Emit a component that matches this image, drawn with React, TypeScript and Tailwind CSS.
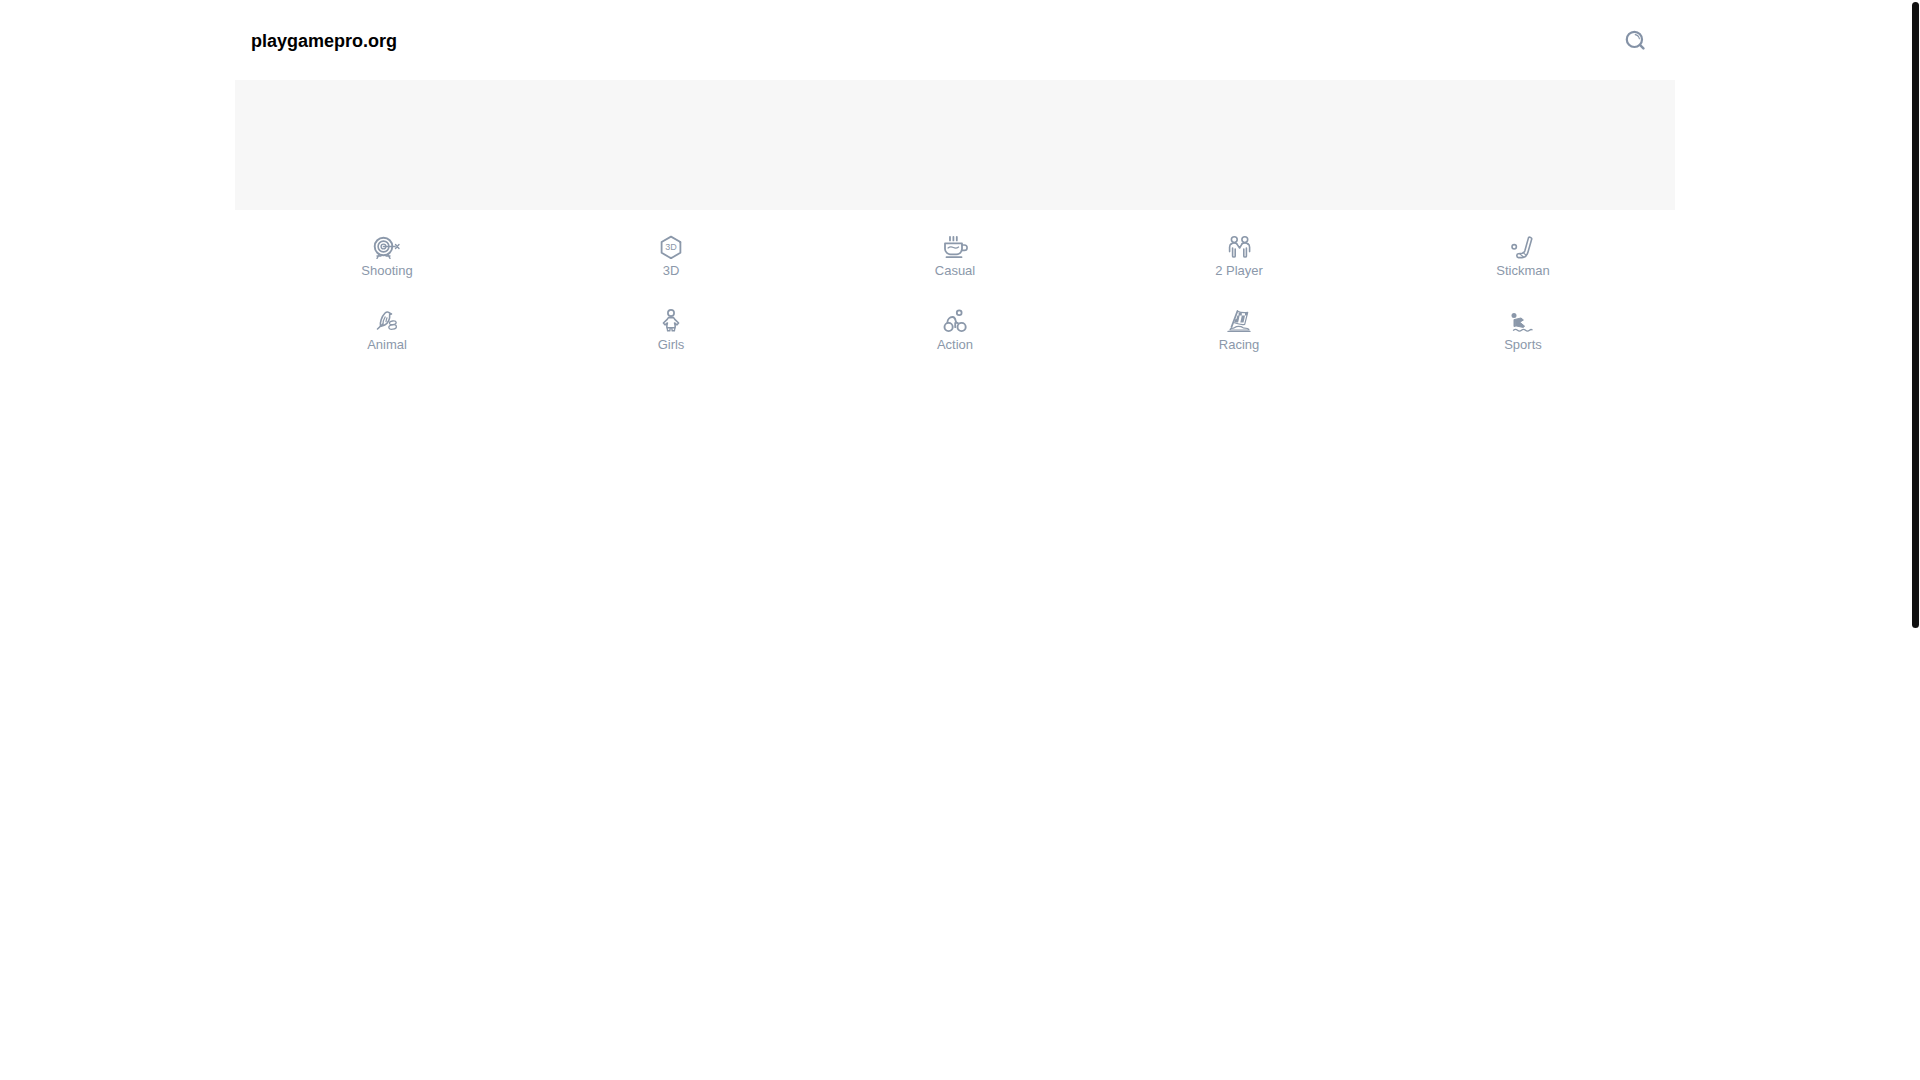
import React from "react";

const S = { fill: "none", stroke: "currentColor", strokeWidth: 1.6, strokeLinecap: "round", strokeLinejoin: "round" } as const;

const Svg = ({ children }: { children: React.ReactNode }) => (
  <svg width="30" height="24" viewBox="0 0 30 24" {...S}>{children}</svg>
);

const icons: Record<string, React.ReactNode> = {
  Shooting: (
    <Svg>
      <circle cx="11.5" cy="11.5" r="8.8" strokeWidth="1.9" />
      <circle cx="11.5" cy="11.5" r="5.4" strokeWidth="1.6" />
      <circle cx="11.5" cy="11.5" r="2.4" strokeWidth="1.4" />
      <path d="M11.5 11.5H23" />
      <path d="M23.5 9.5l3.5 4M27 9.5l-3.5 4" strokeWidth="1.4" />
      <path d="M7 20l-2 3.4M16 20l2 3.4M5 21h4M14 21h4" strokeWidth="1.4" />
    </Svg>
  ),
  "3D": (
    <Svg>
      <path d="M15 1.6l9.4 5.4v10.8L15 23.2 5.6 17.8V7z" strokeWidth="1.8" />
      <circle cx="15" cy="23" r="1.2" fill="currentColor" stroke="none" />
      <circle cx="24.2" cy="7.2" r="1" fill="currentColor" stroke="none" />
      <text x="15" y="15.4" textAnchor="middle" fontFamily="Liberation Sans, sans-serif" fontSize="9" fill="currentColor" stroke="none">3D</text>
    </Svg>
  ),
  Casual: (
    <Svg>
      <path d="M10 1.8v3.6M13.4 1.8v3.6M16.8 1.8v3.6" strokeWidth="1.8" />
      <path d="M5 8.4h17v5.6c0 3-2.6 5.4-5.6 5.4h-5.8C8 19.4 5 17 5 14z" strokeWidth="1.8" />
      <path d="M22 10h2.4a2.3 2.3 0 0 1 0 5.4H21.5" strokeWidth="1.6" />
      <path d="M8 13c2-1.6 3.6-1.4 5.4-.5s3.4.8 5.2-.5" strokeWidth="1.2" />
      <path d="M6.5 22.2h15" strokeWidth="1.8" />
    </Svg>
  ),
  "2 Player": (
    <Svg>
      <circle cx="10.3" cy="4.6" r="2.9" />
      <circle cx="20.8" cy="4.6" r="2.9" />
      <path d="M7.4 8.8c-1.4.6-1.8 2-1.8 3.4v4.4M12.6 8.6l3 4.4 2.6-4.4" />
      <path d="M23.8 8.8c1.4.6 1.8 2 1.8 3.4v4.4" />
      <path d="M8.6 13v8.2c0 1.1 2.6 1.1 2.6 0V14M22.4 13v8.2c0 1.1-2.6 1.1-2.6 0V14" />
      <path d="M7.4 8.8c1.4-.8 3.8-.8 5.2-.2M23.8 8.8c-1.4-.8-4-.8-5.6-.2" />
    </Svg>
  ),
  Stickman: (
    <Svg>
      <circle cx="6.2" cy="11.8" r="2.2" />
      <path d="M20.6 2.4c1-.6 3.2.2 3.2 1.4L20 17c-.8 3-3 5.6-6 5.6H10.4c-1.8 0-2.2-3.4-.2-3.8l4.2-.6c1.4-.3 2-1 2.4-2.2z" />
      <path d="M11.5 18.6l4 3.4M15 17.4l3.2 3" strokeWidth="1.2" />
    </Svg>
  ),
  Animal: (
    <Svg>
      <path d="M5.5 20l5.2-4.8" />
      <path d="M8.5 17c-.8-3 1-9.5 4.6-13 1.6-1.5 3.6-1.2 4.4 0l2 .9-1.8.7c.4 4-1.4 8.6-5 10.4-1.4.7-3.4 1.2-4.2 1" />
      <path d="M11 15.5c-.3-2.6.6-5 2.2-7.6M14 12.6c.3-1.4.5-2.6 1-3.8" strokeWidth="1.2" />
      <ellipse cx="20.8" cy="13.8" rx="3.4" ry="1.8" strokeWidth="1.3" transform="rotate(-8 20.8 13.8)" />
      <ellipse cx="20.6" cy="18" rx="3.8" ry="2.2" strokeWidth="1.3" transform="rotate(-8 20.6 18)" />
    </Svg>
  ),
  Girls: (
    <Svg>
      <circle cx="15" cy="4" r="3.1" strokeWidth="1.7" />
      <path d="M12.4 8.6h5.2l1.2 1.8 3.8 3.6-1.6 1.8-2.4-1.8c.6 2 .8 3.4.4 4.8h-8c-.4-1.4-.2-2.8.4-4.8l-2.4 1.8-1.6-1.8 3.8-3.6z" strokeWidth="1.6" />
      <path d="M11.2 19l.4 2.8h2.2l.4-2.8M15.8 19l.4 2.8h2.2l.4-2.8" strokeWidth="1.4" />
    </Svg>
  ),
  Action: (
    <Svg>
      <circle cx="8.6" cy="18" r="4.1" strokeWidth="1.9" />
      <circle cx="21.6" cy="18" r="4.1" strokeWidth="1.9" />
      <circle cx="19.2" cy="3.8" r="2.4" strokeWidth="1.8" />
      <path d="M7.4 13.4c0-3 2.4-5.6 5.2-5.4 2.4.2 2.8 2.4 3 3.6.2 1.6 1 2.4 2.4 2.6M15.2 18.2v-4.4" strokeWidth="1.8" />
    </Svg>
  ),
  Racing: (
    <Svg>
      <path d="M7.5 18L13.5 2" strokeWidth="1.8" />
      <path d="M13.5 2.2c3 1.4 6.4 1.8 10.2 1.2l-3 12c-3.2.6-7-.4-10.4-1.6" strokeWidth="1.2" />
      <path d="M14.6 3.4h3.2v3.2h-3.2zM21 4h2.6l-.6 2.6h-2zM13.4 6.6h2.2l-.7 3.4h-2.5zM17.8 6.6h3.2l-.7 3.4h-3.2zM11.4 10h3.5l-.8 3.4h-3.8zM17.1 10h3.2l-.8 3.4h-3.2z" fill="currentColor" stroke="none" />
      <path d="M6 21c.2-1.2 1.6-1.8 3.4-1.8l3-1.6c2.6-.4 5-.1 6.8 1.2l4.2.7c1 .3 1.6.8 1.6 1.5z" strokeWidth="1.2" />
      <path d="M4 22.4h22" strokeWidth="1.3" />
    </Svg>
  ),
  Sports: (
    <Svg>
      <circle cx="6" cy="6.6" r="2.5" fill="currentColor" stroke="none" />
      <path d="M7 10.4l6-1.4 2.4 2-3.6 2.2 4.8 4-1.4 1.2-7.8-1.6z" fill="currentColor" stroke="currentColor" strokeWidth="1" />
      <path d="M6.6 11v6" strokeWidth="2.2" />
      <path d="M5.5 21.2c1.4-1.2 2.6-1.2 4 0s2.6 1.2 4 0 2.6-1.2 4 0 2.6 1.2 4 0 1.6-.8 2.6-.4" strokeWidth="1.3" />
    </Svg>
  ),
};

const cats = ["Shooting", "3D", "Casual", "2 Player", "Stickman", "Animal", "Girls", "Action", "Racing", "Sports"];

export default function App() {
  return (
    <div className="flex h-screen w-full overflow-hidden bg-white font-['Liberation_Sans',Arial,sans-serif]">
      <main className="flex-1 flex flex-col items-center">
        <div className="w-[1440px]">
          <header className="h-20 flex items-center justify-between pl-4 pr-[30px]">
            <span className="text-[18px] font-bold text-[#000000] mt-0.5">playgamepro.org</span>
            <svg width="20" height="20" viewBox="0 0 20 20" className="text-[#8492a6]" fill="none" stroke="currentColor" strokeLinecap="round">
              <circle cx="9.4" cy="9.4" r="7.6" strokeWidth="2.2" />
              <path d="M15.2 15.2l3.2 3.2" strokeWidth="2.4" />
              <path d="M10.2 4.6c2.2.4 3.8 2 4.2 4.2" strokeWidth="1.1" />
            </svg>
          </header>
          <div className="h-[130px] bg-[#f7f7f7]" />
          <nav className="grid grid-cols-5 px-2.5 pt-[25px]">
            {cats.map((c) => (
              <a key={c} className="h-[74px] flex flex-col items-center text-[#8b98aa]">
                <span className="h-6 flex items-center">{icons[c]}</span>
                <span className="mt-[3px] text-[13px] leading-[18px]">{c}</span>
              </a>
            ))}
          </nav>
        </div>
      </main>
      <aside className="w-2.5 shrink-0 pt-0.5 pl-0.5">
        <div className="h-[626px] w-[7px] rounded-full bg-[#111111]" />
      </aside>
    </div>
  );
}
